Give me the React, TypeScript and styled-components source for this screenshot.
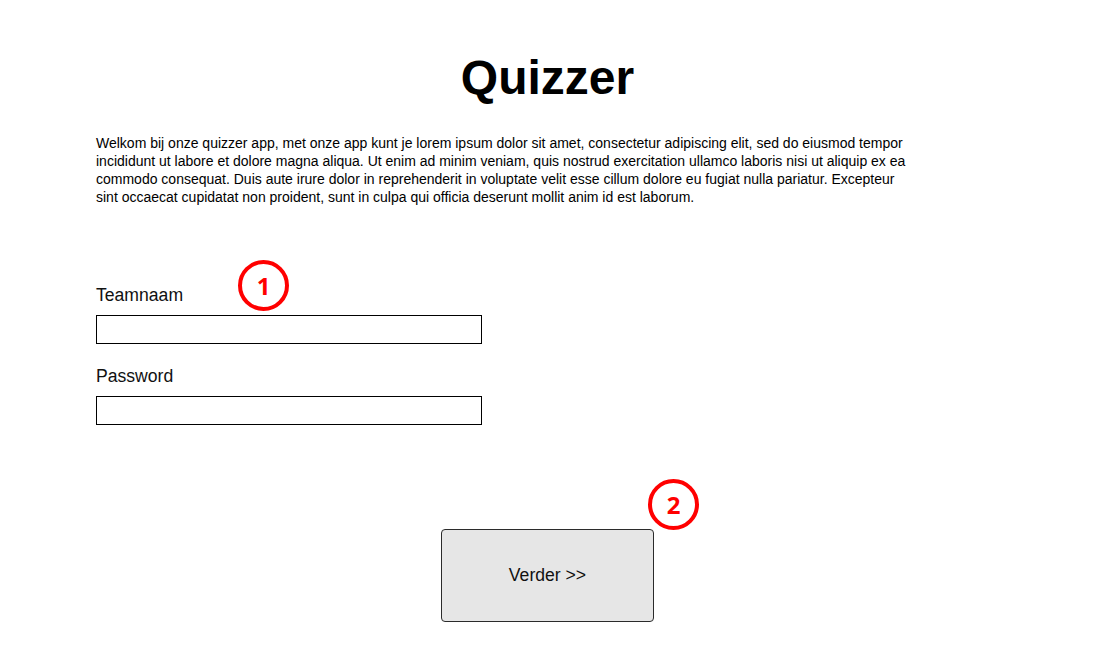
import React from "react";
import styled, { createGlobalStyle } from "styled-components";

const GlobalStyle = createGlobalStyle`
  html, body {
    margin: 0;
    padding: 0;
    background: #ffffff;
  }
  body {
    font-family: "Liberation Sans", Arial, sans-serif;
    color: #000000;
  }
`;

const Page = styled.main`
  padding: 50px 96px 0;
  display: flex;
  flex-direction: column;
`;

const Title = styled.h1`
  margin: 0;
  font-size: 48px;
  line-height: 55px;
  font-weight: 700;
  text-align: center;
`;

const Intro = styled.p`
  margin: 29px 0 0;
  width: 818px;
  font-size: 14px;
  line-height: 18px;
  color: #000;
`;

const Form = styled.form`
  margin-top: 79px;
  display: flex;
  flex-direction: column;
  gap: 22px;
`;

const Field = styled.div`
  position: relative;
  display: flex;
  flex-direction: column;
  gap: 10px;
  width: 386px;
`;

const Label = styled.label`
  font-size: 17.6px;
  line-height: 20px;
  color: #111;
`;

const Input = styled.input`
  box-sizing: border-box;
  width: 386px;
  height: 29px;
  margin: 0;
  border: 1px solid #000;
  border-radius: 0;
  padding: 0 4px;
  font: inherit;
  font-size: 14px;
  background: #fff;
  outline: none;
`;

const Actions = styled.div`
  margin-top: 104px;
  display: flex;
  justify-content: center;
`;

const ButtonWrap = styled.div`
  position: relative;
`;

const NextButton = styled.button`
  box-sizing: border-box;
  width: 213px;
  height: 93px;
  display: flex;
  align-items: center;
  justify-content: center;
  background: #e6e6e6;
  border: 1px solid #2b2b2b;
  border-radius: 4px;
  font-family: "Liberation Sans", Arial, sans-serif;
  font-size: 17.6px;
  color: #111;
  padding: 0;
  cursor: pointer;
`;

const Badge = styled.span<{ $left: number; $top: number }>`
  position: absolute;
  left: ${(p) => p.$left}px;
  top: ${(p) => p.$top}px;
  box-sizing: border-box;
  width: 51px;
  height: 51px;
  border: 4px solid #ff0000;
  border-radius: 50%;
  display: flex;
  align-items: center;
  justify-content: center;
  font-family: "Open Sans", "Noto Sans", sans-serif;
  font-weight: 700;
  font-size: 24px;
  line-height: 1;
  color: #ff0000;
  background: transparent;
`;

export default function App() {
  return (
    <>
      <GlobalStyle />
      <Page>
        <Title>Quizzer</Title>
        <Intro>
          Welkom bij onze quizzer app, met onze app kunt je lorem ipsum dolor sit amet,
          consectetur adipiscing elit, sed do eiusmod tempor incididunt ut labore et dolore
          magna aliqua. Ut enim ad minim veniam, quis nostrud exercitation ullamco laboris
          nisi ut aliquip ex ea commodo consequat. Duis aute irure dolor in reprehenderit in
          voluptate velit esse cillum dolore eu fugiat nulla pariatur. Excepteur sint occaecat
          cupidatat non proident, sunt in culpa qui officia deserunt mollit anim id est laborum.
        </Intro>
        <Form onSubmit={(e) => e.preventDefault()}>
          <Field>
            <Label htmlFor="teamnaam">Teamnaam</Label>
            <Input id="teamnaam" type="text" />
            <Badge $left={142} $top={-25}>1</Badge>
          </Field>
          <Field>
            <Label htmlFor="password">Password</Label>
            <Input id="password" type="password" />
          </Field>
        </Form>
        <Actions>
          <ButtonWrap>
            <NextButton type="button">Verder &gt;&gt;</NextButton>
            <Badge $left={207} $top={-50}>2</Badge>
          </ButtonWrap>
        </Actions>
      </Page>
    </>
  );
}
